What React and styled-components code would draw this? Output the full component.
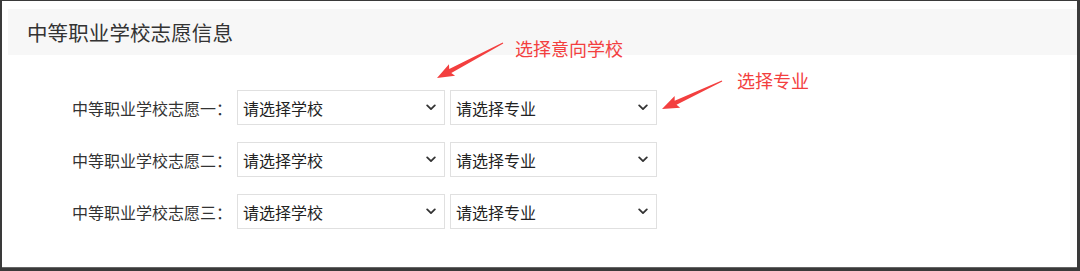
import React from "react";
import styled, { createGlobalStyle } from "styled-components";

const GlobalStyle = createGlobalStyle`
  html, body { margin: 0; padding: 0; background: #fff; }
  body { font-family: "Noto Sans CJK SC", "Noto Sans", sans-serif; }
  * { box-sizing: border-box; }
`;

const Frame = styled.div`
  position: relative;
  width: 1080px;
  height: 271px;
  background: #fff;
  border-style: solid;
  border-color: #3a3a3a;
  border-width: 1px 3px 3px 2px;
  box-shadow: inset 0 -1px 0 #666;
`;

const Header = styled.div`
  margin: 8px 0 0 6px;
  height: 46px;
  background: #f7f7f7;
  display: flex;
  align-items: center;
  padding-left: 19px;
`;

const Title = styled.h2`
  margin: 0;
  font-size: 20.5px;
  font-weight: 400;
  color: #333;
  line-height: 1;
  letter-spacing: 0.1px;
`;

const Form = styled.div`
  display: flex;
  flex-direction: column;
  gap: 17px;
  padding-top: 35px;
`;

const Row = styled.div`
  display: flex;
  align-items: center;
`;

const Label = styled.label`
  width: 235px;
  padding-right: 5px;
  text-align: right;
  font-size: 16px;
  line-height: 1;
  color: #333;
  white-space: nowrap;
`;

const SelectBox = styled.div`
  width: ${(p) => p.$w}px;
  height: 35px;
  margin-right: 5px;
  border: 1px solid #e0e0e0;
  background: #fff;
  display: flex;
  align-items: center;
  justify-content: space-between;
  padding: 0 8px 0 5px;
  font-size: 16px;
  line-height: 1;
  color: #222;
`;

const Chevron = () => (
  <svg width="10" height="7" viewBox="0 0 10 7" aria-hidden="true">
    <path d="M1.2 1.4 L5 5.1 L8.8 1.4" fill="none" stroke="#333" strokeWidth="1.8" strokeLinecap="round" strokeLinejoin="round" />
  </svg>
);

const Select = ({ text, w }) => (
  <SelectBox $w={w} role="combobox">
    <span>{text}</span>
    <Chevron />
  </SelectBox>
);

const Note = styled.div`
  position: absolute;
  left: ${(p) => p.$x}px;
  top: ${(p) => p.$y}px;
  font-size: 18px;
  line-height: 1;
  color: #f33f3f;
  white-space: nowrap;
`;

const Overlay = styled.svg`
  position: absolute;
  left: -2px;
  top: -1px;
  width: 1080px;
  height: 271px;
  pointer-events: none;
`;

function arrowPoints(x1, y1, x2, y2) {
  const dx = x2 - x1;
  const dy = y2 - y1;
  const L = Math.hypot(dx, dy);
  const ux = dx / L;
  const uy = dy / L;
  const px = -uy;
  const py = ux;
  const local = [
    [0, -0.6],
    [L - 15, -2.2],
    [L - 17, -6.5],
    [L, 0],
    [L - 17, 6.5],
    [L - 15, 2.2],
    [0, 0.6],
  ];
  return local
    .map(([a, p]) => `${(x1 + ux * a + px * p).toFixed(2)},${(y1 + uy * a + py * p).toFixed(2)}`)
    .join(" ");
}

const Arrow = ({ x1, y1, x2, y2 }) => (
  <polygon points={arrowPoints(x1, y1, x2, y2)} fill="#f33f3f" />
);

const rows = ["中等职业学校志愿一：", "中等职业学校志愿二：", "中等职业学校志愿三："];

export default function App() {
  return (
    <>
      <GlobalStyle />
      <Frame>
        <Header>
          <Title>中等职业学校志愿信息</Title>
        </Header>
        <Form>
          {rows.map((r) => (
            <Row key={r}>
              <Label>{r}</Label>
              <Select text="请选择学校" w={208} />
              <Select text="请选择专业" w={207} />
            </Row>
          ))}
        </Form>
        <Note $x={513} $y={38}>选择意向学校</Note>
        <Note $x={735} $y={70}>选择专业</Note>
        <Overlay viewBox="0 0 1080 271">
          <Arrow x1={503} y1={43} x2={437} y2={78} />
          <Arrow x1={722} y1={81} x2={662} y2={109} />
        </Overlay>
      </Frame>
    </>
  );
}
